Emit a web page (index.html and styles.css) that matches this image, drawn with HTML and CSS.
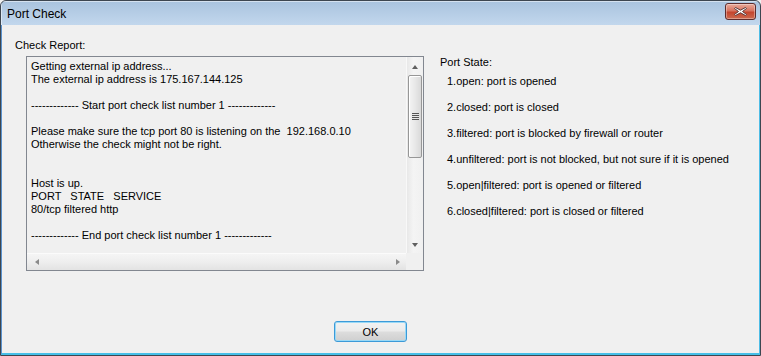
FILE: index.html
```html
<!DOCTYPE html>
<html>
<head>
<meta charset="utf-8">
<title>Port Check</title>
<link rel="stylesheet" href="styles.css">
</head>
<body>
<div class="window">
  <div class="titlebar">
    <span class="title">Port Check</span>
    <button class="close" aria-label="Close">
      <svg width="15" height="11" viewBox="0 0 15 11">
        <path d="M2.5 1.5 L7.5 4.2 L12.5 1.5 L13.5 2.5 L9.5 5.5 L13.5 8.5 L12.5 9.5 L7.5 6.8 L2.5 9.5 L1.5 8.5 L5.5 5.5 L1.5 2.5 Z" fill="#fff" stroke="#5a3a3a" stroke-width="1" stroke-linejoin="round"/>
      </svg>
    </button>
  </div>
  <div class="client">
    <div class="main">
      <div class="report">
        <div class="label">Check Report:</div>
        <div class="listbox">
          <div class="log">Getting external ip address...
The external ip address is 175.167.144.125

------------- Start port check list number 1 -------------

Please make sure the tcp port 80 is listening on the  192.168.0.10
Otherwise the check might not be right.


Host is up.
PORT   STATE   SERVICE
80/tcp filtered http

------------- End port check list number 1 -------------</div>
          <div class="vscroll">
            <span class="arrow up"></span>
            <div class="track">
              <div class="thumb"><span class="grip"></span></div>
            </div>
            <span class="arrow down"></span>
          </div>
          <div class="hscroll">
            <span class="arrow left"></span>
            <span class="arrow right"></span>
          </div>
          <div class="corner"></div>
        </div>
      </div>
      <div class="states">
        <div class="label">Port State:</div>
        <ul class="state-list">
          <li>1.open: port is opened</li>
          <li>2.closed: port is closed</li>
          <li>3.filtered: port is blocked by firewall or router</li>
          <li>4.unfiltered: port is not blocked, but not sure if it is opened</li>
          <li>5.open|filtered: port is opened or filtered</li>
          <li>6.closed|filtered: port is closed or filtered</li>
        </ul>
      </div>
    </div>
    <div class="footer">
      <button class="ok">OK</button>
    </div>
  </div>
</div>
</body>
</html>
```
FILE: styles.css
```css
* { box-sizing: border-box; }
html, body { margin: 0; padding: 0; background: #f0f0f0; }
body {
  font-family: "Liberation Sans", Arial, sans-serif;
  font-size: 11px;
  color: #000;
}
.window {
  width: 761px;
  height: 356px;
  border: 1px solid #3d4650;
  border-radius: 6px 6px 0 0;
  display: flex;
  flex-direction: column;
  background: linear-gradient(#a9c3de, #c2d7ed 24px);
  overflow: hidden;
}
.titlebar {
  height: 24px;
  flex: none;
  display: flex;
  align-items: center;
  justify-content: space-between;
  padding-left: 6px;
  padding-right: 4px;
  box-shadow: inset 1px 1px 0 rgba(255,255,255,0.5);
}
.title {
  font-size: 12px;
  color: #000;
  line-height: 14px;
  margin-top: 1px;
}
.close {
  width: 31px;
  height: 17px;
  margin-top: -3px;
  padding: 0;
  border: 1px solid #5e2c2c;
  border-radius: 3px;
  background: linear-gradient(#e9ab9c 0%, #d7735f 45%, #c4452e 55%, #cd6a4f 100%);
  box-shadow: inset 0 0 0 1px rgba(255,255,255,0.35);
  display: flex;
  align-items: center;
  justify-content: center;
}
.client {
  flex: 1;
  background: #f0f0f0;
  border-left: 1px solid #5b93cf;
  border-right: 1px solid #4ebde6;
  border-bottom: 2px solid #45bfe8;
  display: flex;
  flex-direction: column;
  padding: 14px 0 0 13px;
}
.main {
  display: flex;
  gap: 16px;
}
.label { line-height: 13px; }
.listbox {
  margin: 4px 0 0 11px;
  width: 398px;
  height: 215px;
  border: 1px solid #828790;
  background: #f0f0f0;
  display: grid;
  grid-template-columns: 1fr 17px;
  grid-template-rows: 1fr 17px;
}
.log {
  white-space: pre;
  overflow: hidden;
  line-height: 13px;
  padding: 3px 4px;
}
.vscroll {
  display: flex;
  flex-direction: column;
  align-items: center;
  background: linear-gradient(90deg, #e8e8e8, #f4f4f4 40%, #f0f0f0);
  border-left: 1px solid #f8f8f8;
}
.track {
  flex: 1;
  width: 100%;
  padding: 0 1px;
}
.thumb {
  margin-top: 1px;
  height: 83px;
  border: 1px solid #979797;
  border-radius: 2px;
  background: linear-gradient(90deg, #f4f4f4, #e8e8e8 50%, #d9d9d9);
  box-shadow: inset 1px 1px 0 #fff;
  display: flex;
  align-items: center;
  justify-content: center;
}
.grip {
  width: 7px;
  height: 7px;
  background: repeating-linear-gradient(#555 0 1px, #e6e6e6 1px 2px);
}
.arrow {
  width: 0;
  height: 0;
  flex: none;
}
.up {
  margin: 8px 0 5px;
  border-left: 3.5px solid transparent;
  border-right: 3.5px solid transparent;
  border-bottom: 4px solid #606060;
}
.down {
  margin: 5px 0 6px;
  border-left: 3.5px solid transparent;
  border-right: 3.5px solid transparent;
  border-top: 4px solid #606060;
}
.hscroll {
  display: flex;
  align-items: center;
  justify-content: space-between;
  padding: 0 6px 0 8px;
  background: linear-gradient(#f5f5f5, #eeeeee 50%, #e3e3e3);
  border-top: 1px solid #fbfbfb;
}
.left {
  border-top: 3.5px solid transparent;
  border-bottom: 3.5px solid transparent;
  border-right: 4px solid #8a8a8a;
}
.right {
  border-top: 3.5px solid transparent;
  border-bottom: 3.5px solid transparent;
  border-left: 4px solid #8a8a8a;
}
.corner { background: #f0f0f0; }
.states {
  padding-top: 17px;
}
.state-list {
  list-style: none;
  margin: 6px 0 0 0;
  padding: 0 0 0 7px;
}
.state-list li {
  line-height: 13px;
  margin-bottom: 13px;
}
.footer {
  margin-top: auto;
  padding: 0 0 11px 319px;
  display: flex;
}
.ok {
  width: 73px;
  height: 21px;
  padding: 0;
  font-family: "Liberation Sans", Arial, sans-serif;
  font-size: 11px;
  color: #000;
  border: 1px solid #3c9ad8;
  border-radius: 3px;
  background: linear-gradient(#f2f2f2 0%, #ebebeb 48%, #dddddd 52%, #cfcfcf 100%);
  box-shadow: inset 0 0 0 1px #9ad9f6;
}
```
